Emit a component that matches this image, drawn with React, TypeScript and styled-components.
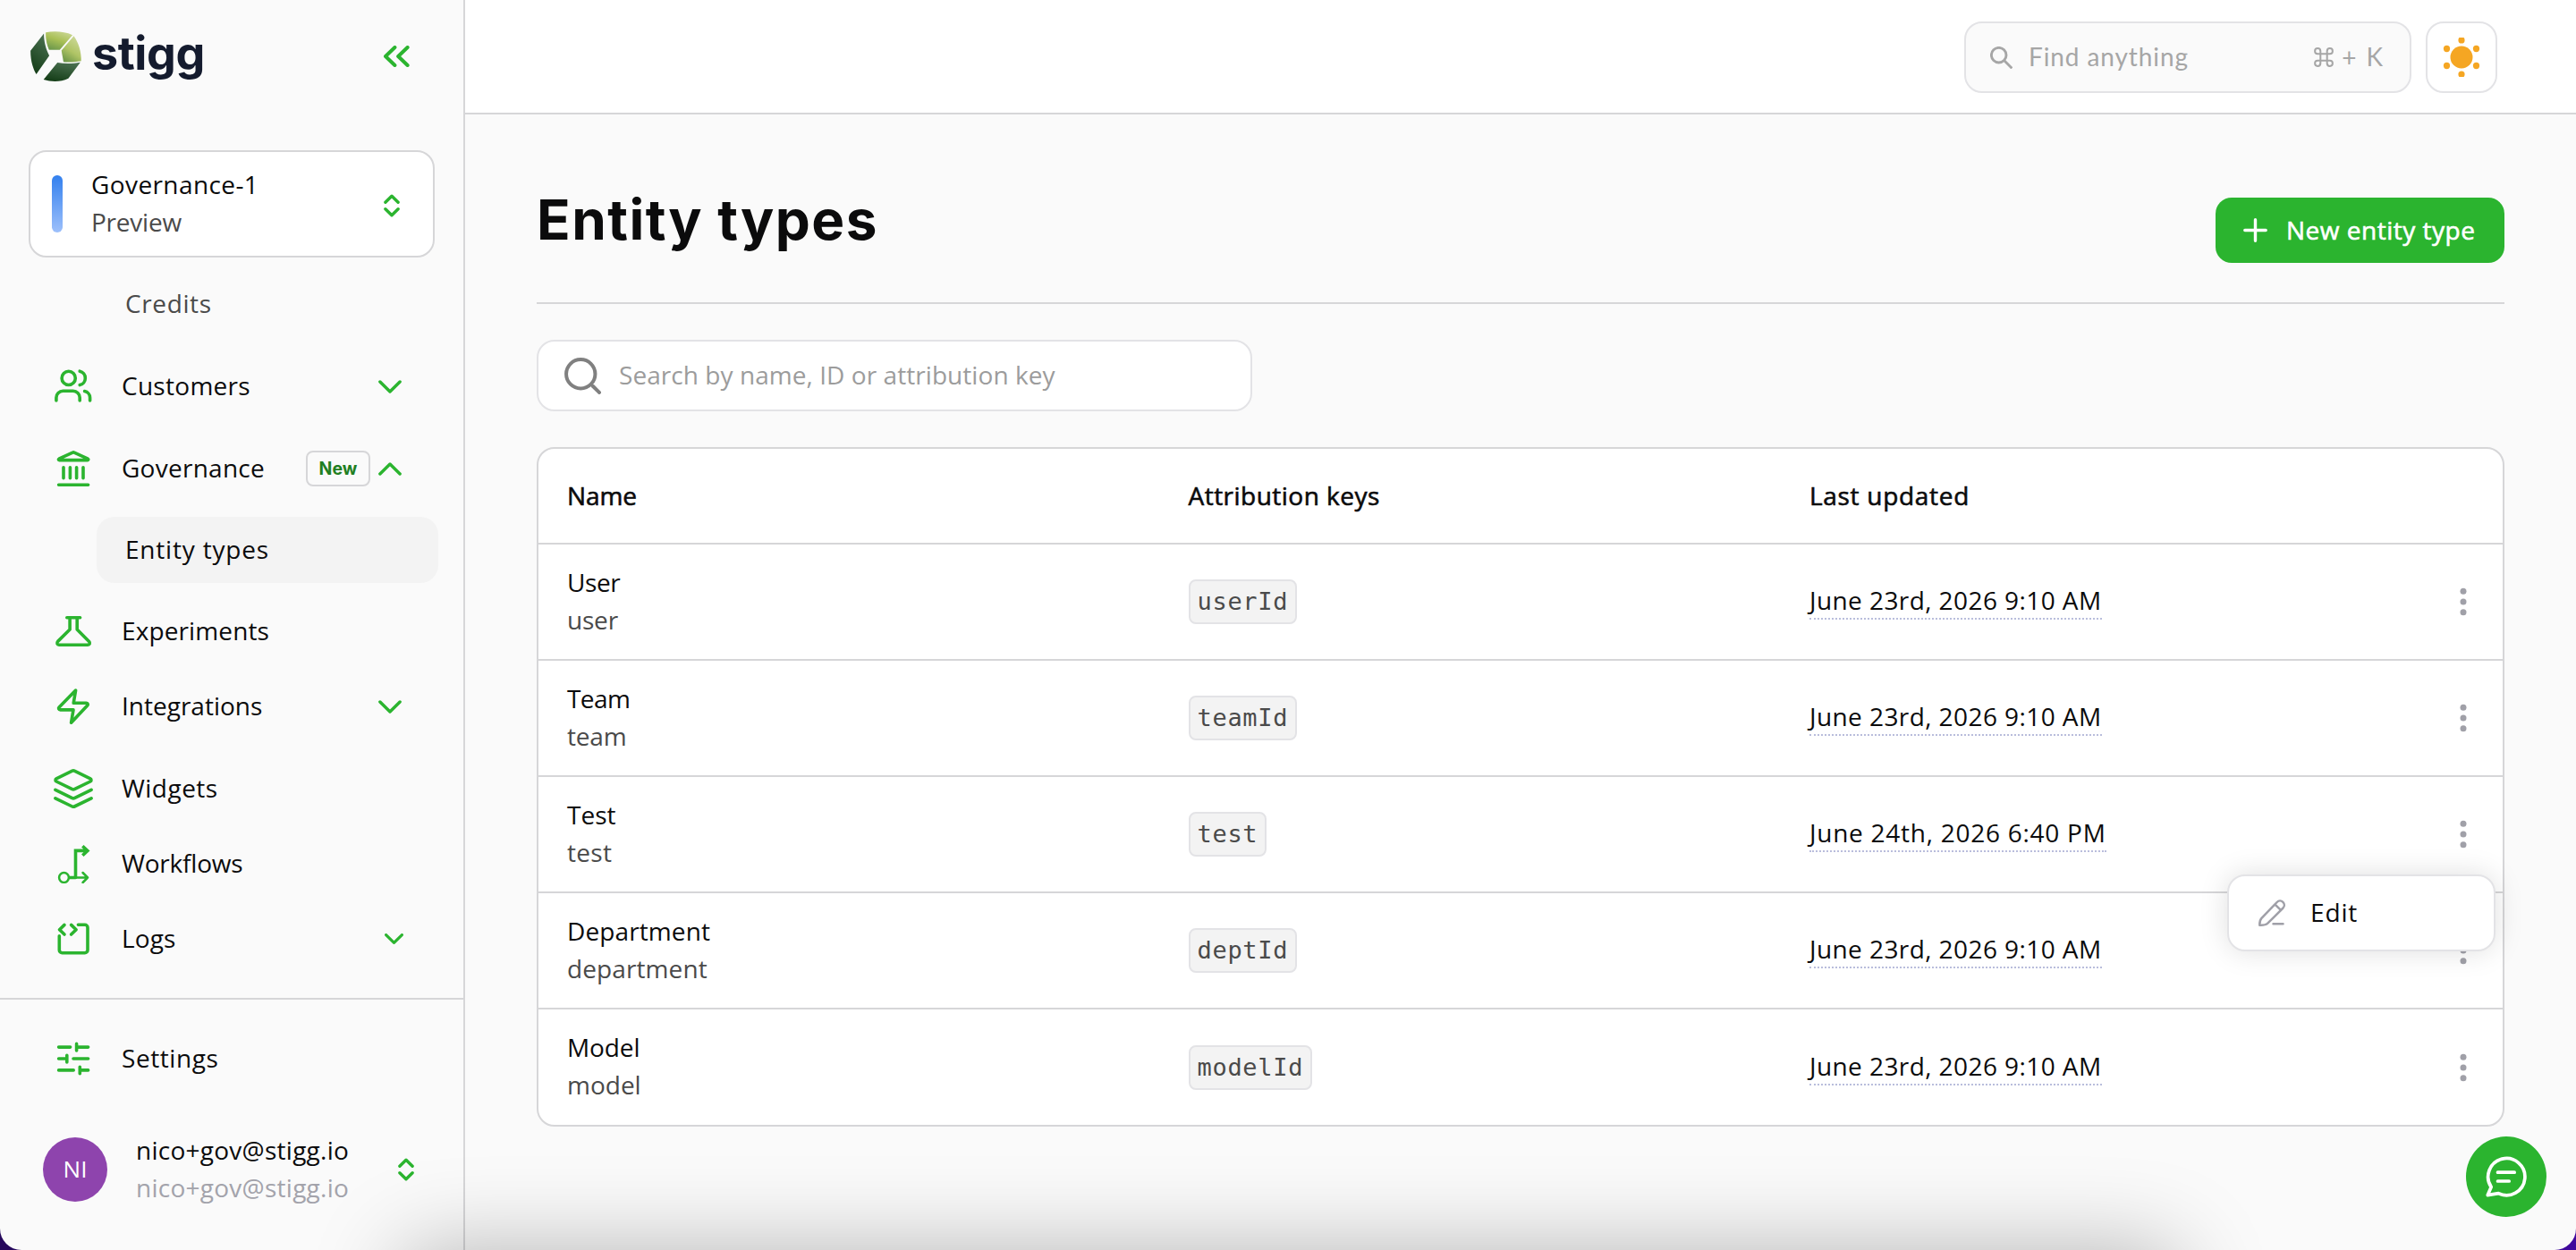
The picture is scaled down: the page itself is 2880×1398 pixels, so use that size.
import React from "react";
import styled, { createGlobalStyle } from "styled-components";

const green = "#2bb42f";
const line = "#d6d6d8";
const softLine = "#e3e3e6";
const sans = `"Open Sans", "Noto Sans", sans-serif`;

const GlobalStyle = createGlobalStyle`
  * { box-sizing: border-box; }
  html, body { margin: 0; padding: 0; height: 100%; overflow: hidden; }
  body {
    background: linear-gradient(90deg, #26085c, #3f089c);
    font-family: ${sans};
    font-size: 28px;
    color: #0b0b0c;
  }
  button { font: inherit; border: 0; padding: 0; margin: 0; background: none; cursor: pointer; }
  svg { display: block; flex: none; }
`;

const Window = styled.div`
  position: relative;
  display: flex;
  width: 2880px;
  height: 1398px;
  overflow: hidden;
  background: #fafafa;
  border-radius: 0 0 24px 24px;
`;

const Text = styled.span<{ $ls?: number; $tone?: string; $medium?: boolean }>`
  line-height: 42px;
  white-space: nowrap;
  letter-spacing: ${(p) => p.$ls ?? 0}px;
  color: ${(p) => p.$tone ?? "#0b0b0c"};
  -webkit-text-stroke: ${(p) => (p.$medium ? "0.6px currentColor" : "0")};
`;

/* ---------- Sidebar ---------- */

const Sidebar = styled.aside`
  display: flex;
  flex-direction: column;
  flex: none;
  width: 520px;
  height: 100%;
  border-right: 2px solid ${line};
`;

const Brand = styled.div`
  display: flex;
  align-items: center;
  height: 126px;
  padding: 0 60px 0 34px;
`;

const Wordmark = styled.span`
  flex: 1;
  margin-left: 12px;
  padding-bottom: 7px;
  font-family: Inter, sans-serif;
  font-size: 52px;
  line-height: 60px;
  font-weight: 700;
  letter-spacing: -0.4px;
  color: #141b2e;
`;

const EnvironmentPicker = styled.button`
  display: flex;
  align-items: center;
  width: 454px;
  height: 120px;
  margin: 42px 0 0 32px;
  padding: 0 37px 0 24px;
  background: #fff;
  border: 2px solid ${line};
  border-radius: 20px;
  text-align: left;
`;

const EnvironmentBar = styled.span`
  width: 12px;
  height: 64px;
  border-radius: 6px;
  background: linear-gradient(#3380ee, #9dc0fb);
`;

const Stack = styled.span<{ $left: number }>`
  display: flex;
  flex: 1;
  flex-direction: column;
  margin-left: ${(p) => p.$left}px;
  padding-bottom: 3px;
`;

const Nav = styled.nav`
  display: flex;
  flex-direction: column;
  height: 828px;
`;

const SubItem = styled.a<{ $active?: boolean; $top: number }>`
  display: flex;
  align-items: center;
  width: 382px;
  height: 74px;
  margin: ${(p) => p.$top}px 0 0 108px;
  padding: 0 0 2px 32px;
  border-radius: 20px;
  background: ${(p) => (p.$active ? "#f3f3f3" : "transparent")};
`;

const NavItem = styled.a<{ $top: number; $end: number }>`
  display: flex;
  align-items: center;
  height: 76px;
  margin-top: ${(p) => p.$top}px;
  padding: 0 ${(p) => p.$end}px 0 60px;
`;

const NavLabel = styled(Text)`
  flex: 1;
  margin-left: 32px;
  padding-bottom: 3px;
`;

const NewBadge = styled.span`
  display: flex;
  align-items: center;
  justify-content: center;
  width: 72px;
  height: 40px;
  margin-right: 9px;
  border: 2px solid ${line};
  border-radius: 8px;
  font-family: Inter, sans-serif;
  font-size: 19.5px;
  font-weight: 700;
  color: #1f7f22;
`;

const SidebarFooter = styled.div`
  display: flex;
  flex-direction: column;
  border-top: 2px solid ${line};
`;

const Account = styled.div`
  display: flex;
  align-items: center;
  height: 84px;
  margin-top: 44px;
  padding: 0 55px 0 48px;
`;

const Avatar = styled.span`
  display: flex;
  align-items: center;
  justify-content: center;
  width: 72px;
  height: 72px;
  padding-bottom: 2px;
  border-radius: 50%;
  background: #8e44ad;
  color: #fff;
  font-size: 26px;
`;

/* ---------- Main column ---------- */

const Main = styled.main`
  display: flex;
  flex: 1;
  flex-direction: column;
`;

const TopBar = styled.header`
  display: flex;
  align-items: center;
  justify-content: flex-end;
  gap: 16px;
  height: 128px;
  padding: 2px 88px 0 0;
  background: #fff;
  border-bottom: 2px solid ${line};
`;

const QuickFind = styled.div`
  display: flex;
  align-items: center;
  width: 500px;
  height: 80px;
  padding: 0 30px 0 27px;
  border: 2px solid ${softLine};
  border-radius: 20px;
  background: #fafafa;
  font-family: Lato, sans-serif;
  color: #a6a6a6;
`;

const QuickFindLabel = styled.span`
  flex: 1;
  margin-left: 18px;
  padding-bottom: 2px;
  letter-spacing: 0.9px;
`;

const Shortcut = styled.span`
  display: flex;
  align-items: center;
  gap: 9px;
`;

const ShortcutKey = styled.span`
  margin-left: 2px;
  padding-bottom: 2px;
`;

const ThemeToggle = styled.button`
  display: flex;
  align-items: center;
  justify-content: center;
  width: 80px;
  height: 80px;
  border: 2px solid ${softLine};
  border-radius: 20px;
  background: #fff;
`;

const Page = styled.section`
  display: flex;
  flex-direction: column;
  padding: 0 80px;
`;

const PageHead = styled.div`
  display: flex;
  align-items: flex-start;
  justify-content: space-between;
  height: 212px;
  padding-top: 93px;
  border-bottom: 2px solid ${line};
`;

const Title = styled.h1`
  margin: 0;
  font-family: Inter, sans-serif;
  font-size: 62px;
  line-height: 49px;
  font-weight: 700;
  letter-spacing: 1.5px;
`;

const PrimaryButton = styled.button`
  display: flex;
  align-items: center;
  width: 323px;
  height: 73px;
  padding-left: 31px;
  border-radius: 18px;
  background: ${green};
`;

const PrimaryLabel = styled(Text)`
  margin-left: 21px;
  padding-bottom: 2px;
`;

const SearchField = styled.div`
  display: flex;
  align-items: center;
  width: 800px;
  height: 80px;
  margin-top: 40px;
  padding-left: 29px;
  border: 2px solid ${softLine};
  border-radius: 20px;
  background: #fff;
`;

const SearchIcon = styled.span`
  color: #808080;
`;

const SearchHint = styled(Text)`
  margin-left: 20px;
  padding-bottom: 3px;
`;

/* ---------- Table ---------- */

const Table = styled.div`
  margin-top: 40px;
  border: 2px solid ${line};
  border-radius: 20px;
  background: #fff;
`;

const Row = styled.div<{ $height: number }>`
  display: grid;
  grid-template-columns: 694.5px 694.5px 1fr 88px;
  align-items: center;
  height: ${(p) => p.$height}px;
  padding-left: 32px;
  border-bottom: 2px solid ${line};
  &:last-child { border-bottom: 0; }
`;

const HeadCell = styled(Text)`
  padding-bottom: 2px;
`;

const NameCell = styled.div`
  display: flex;
  flex-direction: column;
  padding-bottom: 3px;
`;

const KeyTag = styled.code`
  display: inline-flex;
  align-items: center;
  height: 50px;
  padding: 0 8px 1px;
  border: 2px solid ${softLine};
  border-radius: 8px;
  background: #f3f3f3;
  font-family: "DejaVu Sans Mono", monospace;
  font-size: 27px;
  letter-spacing: 0.7px;
  color: #4a4a4a;
`;

const DateText = styled(Text)`
  display: inline-block;
  height: 42px;
  margin-bottom: 2px;
  line-height: 40px;
  border-bottom: 2px dotted #b9bddc;
`;

const ActionCell = styled.div`
  position: relative;
  display: flex;
  align-items: center;
  justify-content: center;
  align-self: stretch;
`;

const Menu = styled.div`
  position: absolute;
  z-index: 2;
  top: 109px;
  right: 8px;
  display: flex;
  align-items: center;
  width: 300px;
  height: 86px;
  padding-left: 33px;
  border: 2px solid ${softLine};
  border-radius: 20px;
  background: #fff;
  box-shadow: 0 0 32px rgba(0, 0, 0, 0.13);
`;

const MenuLabel = styled(Text)`
  margin-left: 27px;
  padding-bottom: 3px;
`;

const ChatButton = styled.button`
  position: absolute;
  right: 33px;
  bottom: 37px;
  width: 90px;
  height: 90px;
  border-radius: 50%;
  background: ${green};
`;

const BottomShade = styled.div`
  position: absolute;
  top: 1398px;
  left: 450px;
  width: 1985px;
  height: 240px;
  border-radius: 20px;
  pointer-events: none;
  box-shadow: 0 0 100px rgba(0, 0, 0, 0.28);
`;

/* ---------- Icons ---------- */

const NavIcon = ({ children }: { children: React.ReactNode }) => (
  <svg width="44" height="44" viewBox="0 0 44 44" fill="none" stroke={green} strokeWidth="3.6" strokeLinecap="round" strokeLinejoin="round">
    {children}
  </svg>
);

const icons: Record<string, React.ReactNode> = {
  customers: (
    <NavIcon>
      <circle cx="16.7" cy="12.9" r="7.6" />
      <path d="M29.2 5.2a7.9 7.9 0 0 1 0 15.4M2.9 38v-3.2a7.5 7.5 0 0 1 7.5-7.5h11.3a7.5 7.5 0 0 1 7.5 7.5V38M34.6 27.6a7.4 7.4 0 0 1 6 7.2V38" />
    </NavIcon>
  ),
  governance: (
    <NavIcon>
      <path d="M6.2 12.6h31.8c.9 0 1-1 .3-1.4L23 4.1a2 2 0 0 0-1.8 0L5.9 11.2c-.7.4-.6 1.4.3 1.4ZM11 20.8v12M18.4 20.8v12M25.6 20.8v12M33 20.8v12M5.6 40.3h33" />
    </NavIcon>
  ),
  experiments: (
    <NavIcon>
      <path d="M14.8 6.7h14.8M18.1 6.7V20L4.6 33.4c-1.5 1.6-.7 3.8 1.4 3.8h32.2c2.1 0 2.9-2.2 1.4-3.8L26.2 20V6.7" />
    </NavIcon>
  ),
  integrations: (
    <NavIcon>
      <path d="M24.6 4.1 22.2 18.2h14.2c1.7 0 2.4 1.6 1.3 2.8L19.6 40.2 22 25.9H7.4c-1.7 0-2.4-1.8-1.3-3Z" />
    </NavIcon>
  ),
  widgets: (
    <NavIcon>
      <path d="M20.8 2.2a2.8 2.8 0 0 1 2.4 0L41 10.8a1.8 1.8 0 0 1 0 3.2l-17.8 8.7a2.8 2.8 0 0 1-2.4 0L3 14a1.8 1.8 0 0 1 0-3.2ZM1.9 23.3l18.9 9.3a2.8 2.8 0 0 0 2.4 0l18.9-9.3M1.9 32.8l18.9 9.2a2.8 2.8 0 0 0 2.4 0l18.9-9.2" />
    </NavIcon>
  ),
  workflows: (
    <NavIcon>
      <path d="M24.5 37.5V7.4H37.6M32.3 2.2l5.6 5.2-5.6 5.4" strokeLinecap="butt" strokeLinejoin="miter" />
      <path d="M18 37.5h6.5" />
      <path d="M24.5 37.5H38M32.6 32l5.4 5.5-5.4 5.5" strokeWidth="2.5" />
      <circle cx="11.5" cy="37.5" r="5.4" strokeWidth="2.5" />
    </NavIcon>
  ),
  logs: (
    <NavIcon>
      <path d="M6.3 18.8v15.7a3.2 3.2 0 0 0 3.2 3.2h25.3a3.2 3.2 0 0 0 3.2-3.2v-25a3.2 3.2 0 0 0-3.2-3.2h-7.4M12 6.4l-5.5 5.3L12 17M19.6 6.4l5.5 5.3-5.5 5.3" />
    </NavIcon>
  ),
  settings: (
    <NavIcon>
      <path d="M5.6 9.1h13M25.6 9.1h13M25.6 5.4v7.6M5.6 22h9.2M14.8 18.3v7.6M22 22h16.6M5.6 34.9h16.6M29.3 34.9h9.3M29.3 31.2v7.6" />
    </NavIcon>
  ),
};

const Chevron = ({ up, small }: { up?: boolean; small?: boolean }) => (
  <svg width={small ? 21 : 26} height={small ? 12 : 15} viewBox="0 0 26 15" fill="none" stroke={green} strokeWidth={small ? 4 : 3.5} strokeLinecap="round" strokeLinejoin="round">
    <path d={up ? "M1.9 12.9 13 2 24.1 12.9" : "M1.9 2 13 12.9 24.1 2"} />
  </svg>
);

const UpDown = () => (
  <svg width="18" height="26" viewBox="0 0 18 26" fill="none" stroke={green} strokeWidth="3.4" strokeLinecap="round" strokeLinejoin="round">
    <path d="M1.9 9.3 9 2.2l7.1 7.1M1.9 16.8 9 23.8l7.1-7" />
  </svg>
);

const PickerArrows = styled.span`
  padding-top: 4px;
`;

const Logo = () => (
  <svg width="57" height="57" viewBox="0 0 57 57">
    <defs>
      <linearGradient id="leafDark" x1="0.7" y1="0" x2="0.3" y2="1">
        <stop offset="0" stopColor="#4a7050" />
        <stop offset="1" stopColor="#153e18" />
      </linearGradient>
      <linearGradient id="leafTop" x1="0.8" y1="0" x2="0.3" y2="1">
        <stop offset="0" stopColor="#cbd796" />
        <stop offset="0.5" stopColor="#a9c056" />
        <stop offset="1" stopColor="#6f9a4c" />
      </linearGradient>
      <linearGradient id="leafRight" x1="0.7" y1="0" x2="0.2" y2="1">
        <stop offset="0" stopColor="#cdd998" />
        <stop offset="0.55" stopColor="#afc465" />
        <stop offset="1" stopColor="#6b9547" />
      </linearGradient>
    </defs>
    <path fill="url(#leafDark)" d="M.1 21.7 15.1 2.6C15 12 17.6 20.5 21.1 27.3L6.6 48C3.2 42 .2 34 .1 21.7Z" />
    <path fill="url(#leafTop)" d="M17.2 1.2C26-.4 38-.2 47.1 4.2L32.8 20.7H20.8C18.3 15 16.8 8 17.2 1.2Z" />
    <path fill="url(#leafRight)" d="M48.5 5.2C54 13 57 23 56.7 33.2 50 34.5 43 34.8 37 34.3L34.7 21.5Z" />
    <path fill="url(#leafDark)" d="M30.2 35C39 36.7 48 36.2 55.8 34.7L42.4 52.7C34 56.7 24 56.8 14.7 54Z" />
  </svg>
);

const Magnifier = ({ size, width }: { size: number; width: number }) => (
  <svg width={size} height={size} viewBox="0 0 40 40" fill="none" stroke="currentColor" strokeWidth={width}>
    {size > 30 ? <path d="M38 38 31 31" strokeLinecap="round" /> : <path d="M39 39 24.5 24.5" />}
    {size > 30 ? <circle cx="17.8" cy="17.8" r="15.8" /> : <circle cx="15.5" cy="15.5" r="13.3" />}
  </svg>
);

const Command = () => (
  <svg width="22" height="22" viewBox="0 0 22 22" fill="none" stroke="currentColor" strokeWidth="2">
    <path d="M7.3 4.1A3.1 3.1 0 1 0 4.2 7.3H17.8A3.1 3.1 0 1 0 14.7 4.1V17.9A3.1 3.1 0 1 0 17.8 14.7H4.2A3.1 3.1 0 1 0 7.3 17.9Z" />
  </svg>
);

const Sun = () => (
  <svg width="44" height="44" viewBox="0 0 44 44" fill="#f5a623">
    <circle cx="22" cy="22" r="12.5" />
    {[[22, 2.9], [22, 41.1], [5.5, 12.5], [38.5, 12.5], [5.5, 31.5], [38.5, 31.5]].map(([x, y]) => (
      <ellipse key={`${x}-${y}`} cx={x} cy={y} rx="3.6" ry="3.7" />
    ))}
  </svg>
);

const Kebab = () => (
  <svg width="8" height="32" viewBox="0 0 8 32" fill="#a0a0a8">
    <circle cx="4" cy="4.3" r="3.5" />
    <circle cx="4" cy="16" r="3.5" />
    <circle cx="4" cy="27.7" r="3.5" />
  </svg>
);

const Pencil = () => (
  <svg width="31" height="31" viewBox="0 0 31 31" fill="none" stroke="#a0a0a8" strokeWidth="2.5" strokeLinecap="round" strokeLinejoin="round">
    <path d="M1.3 28.7c-.1-3.5.3-5.9 2.2-7.9L20.7 3a4.7 4.7 0 0 1 6.8 6.5L10 26.9c-2 1.700-5 2-8.7 1.8ZM18.6 5.6l6.4 6.3M16.500 27.200h11" />
  </svg>
);

/* ---------- Data ---------- */

type NavEntry = { icon: string; label: string; ls: number; top: number; chevron?: "down" | "up" | "small"; badge?: string };

const primaryNav: NavEntry[] = [
  { icon: "customers", label: "Customers", ls: 0.28, top: 17, chevron: "down" },
  { icon: "governance", label: "Governance", ls: 0.26, top: 16, chevron: "up", badge: "New" },
];

const secondaryNav: NavEntry[] = [
  { icon: "experiments", label: "Experiments", ls: 0.12, top: 16 },
  { icon: "integrations", label: "Integrations", ls: 0, top: 8, chevron: "down" },
  { icon: "widgets", label: "Widgets", ls: 0.47, top: 16 },
  { icon: "workflows", label: "Workflows", ls: -0.2, top: 8 },
  { icon: "logs", label: "Logs", ls: 0.15, top: 8, chevron: "small" },
];

const rows = [
  { name: "User", nameLs: -0.4, id: "user", idLs: -0.2, tag: "userId", date: "June 23rd, 2026 9:10 AM", dateLs: 0.42 },
  { name: "Team", nameLs: -0.6, id: "team", idLs: -0.2, tag: "teamId", date: "June 23rd, 2026 9:10 AM", dateLs: 0.42 },
  { name: "Test", nameLs: 0, id: "test", idLs: 0.3, tag: "test", date: "June 24th, 2026 6:40 PM", dateLs: 0.74, menu: true },
  { name: "Department", nameLs: 0.11, id: "department", idLs: 0.1, tag: "deptId", date: "June 23rd, 2026 9:10 AM", dateLs: 0.42 },
  { name: "Model", nameLs: -0.1, id: "model", idLs: 0, tag: "modelId", date: "June 23rd, 2026 9:10 AM", dateLs: 0.42 },
];

const NavEntryRow = ({ entry }: { entry: NavEntry }) => (
  <NavItem $top={entry.top} $end={entry.chevron === "small" ? 67.5 : 69}>
    {icons[entry.icon]}
    <NavLabel $ls={entry.ls}>{entry.label}</NavLabel>
    {entry.badge && <NewBadge>{entry.badge}</NewBadge>}
    {entry.chevron && <Chevron up={entry.chevron === "up"} small={entry.chevron === "small"} />}
  </NavItem>
);

export default function App() {
  return (
    <>
      <GlobalStyle />
      <Window>
        <Sidebar>
          <Brand>
            <Logo />
            <Wordmark>stigg</Wordmark>
            <svg width="29" height="24" viewBox="0 0 29 24" fill="none" stroke={green} strokeWidth="4" strokeLinecap="round" strokeLinejoin="round">
              <path d="M12.4 2 2 12l10.4 10M26.6 2 16.2 12l10.4 10" />
            </svg>
          </Brand>
          <EnvironmentPicker>
            <EnvironmentBar />
            <Stack $left={32}>
              <Text $ls={0.4}>Governance-1</Text>
              <Text $ls={-0.23} $tone="#4a4a4a">Preview</Text>
            </Stack>
            <PickerArrows><UpDown /></PickerArrows>
          </EnvironmentPicker>
          <Nav>
            <SubItem $top={15}>
              <Text $ls={0.62} $tone="#4a4a4a">Credits</Text>
            </SubItem>
            {primaryNav.map((e) => <NavEntryRow key={e.label} entry={e} />)}
            <SubItem $top={16} $active>
              <Text $ls={0.8}>Entity types</Text>
            </SubItem>
            {secondaryNav.map((e) => <NavEntryRow key={e.label} entry={e} />)}
          </Nav>
          <SidebarFooter>
            <NavEntryRow entry={{ icon: "settings", label: "Settings", ls: 0.57, top: 28 }} />
            <Account>
              <Avatar>NI</Avatar>
              <Stack $left={32}>
                <Text $ls={0.26}>nico+gov@stigg.io</Text>
                <Text $ls={0.26} $tone="#a3a3ab">nico+gov@stigg.io</Text>
              </Stack>
              <UpDown />
            </Account>
          </SidebarFooter>
        </Sidebar>

        <Main>
          <TopBar>
            <QuickFind>
              <Magnifier size={25} width={4.6} />
              <QuickFindLabel>Find anything</QuickFindLabel>
              <Shortcut>
                <Command />
                <span>+</span>
                <ShortcutKey>K</ShortcutKey>
              </Shortcut>
            </QuickFind>
            <ThemeToggle aria-label="Theme"><Sun /></ThemeToggle>
          </TopBar>

          <Page>
            <PageHead>
              <Title>Entity types</Title>
              <PrimaryButton>
                <svg width="27" height="27" viewBox="0 0 27 27" fill="none" stroke="#fff" strokeWidth="3.4" strokeLinecap="round">
                  <path d="M13.5 1.8v23.4M1.8 13.5h23.4" />
                </svg>
                <PrimaryLabel $ls={0.5} $medium $tone="#fff">New entity type</PrimaryLabel>
              </PrimaryButton>
            </PageHead>

            <SearchField>
              <SearchIcon><Magnifier size={41} width={3.9} /></SearchIcon>
              <SearchHint $ls={0.06} $tone="#9c9c9c">Search by name, ID or attribution key</SearchHint>
            </SearchField>

            <Table>
              <Row $height={107}>
                <HeadCell $medium $ls={-0.1}>Name</HeadCell>
                <HeadCell $medium $ls={0.48}>Attribution keys</HeadCell>
                <HeadCell $medium $ls={0.7}>Last updated</HeadCell>
              </Row>
              {rows.map((r, i) => (
                <Row key={r.id} $height={i === rows.length - 1 ? 129 : 130}>
                  <NameCell>
                    <Text $ls={r.nameLs}>{r.name}</Text>
                    <Text $ls={r.idLs} $tone="#4a4a4a">{r.id}</Text>
                  </NameCell>
                  <div><KeyTag>{r.tag}</KeyTag></div>
                  <div><DateText $ls={r.dateLs}>{r.date}</DateText></div>
                  <ActionCell>
                    <Kebab />
                    {r.menu && (
                      <Menu>
                        <Pencil />
                        <MenuLabel $ls={0.85}>Edit</MenuLabel>
                      </Menu>
                    )}
                  </ActionCell>
                </Row>
              ))}
            </Table>
          </Page>
        </Main>

        <BottomShade />
        <ChatButton aria-label="Chat">
          <svg width="90" height="90" viewBox="0 0 90 90" fill="none" stroke="#fff" strokeWidth="3.7" strokeLinecap="round" strokeLinejoin="round">
            <path d="M28.2 56.6A20.6 20.6 0 1 1 36.4 63.7L24.3 65.6ZM35.5 40.2h18.7M35.5 50h12.7" />
          </svg>
        </ChatButton>
      </Window>
    </>
  );
}
